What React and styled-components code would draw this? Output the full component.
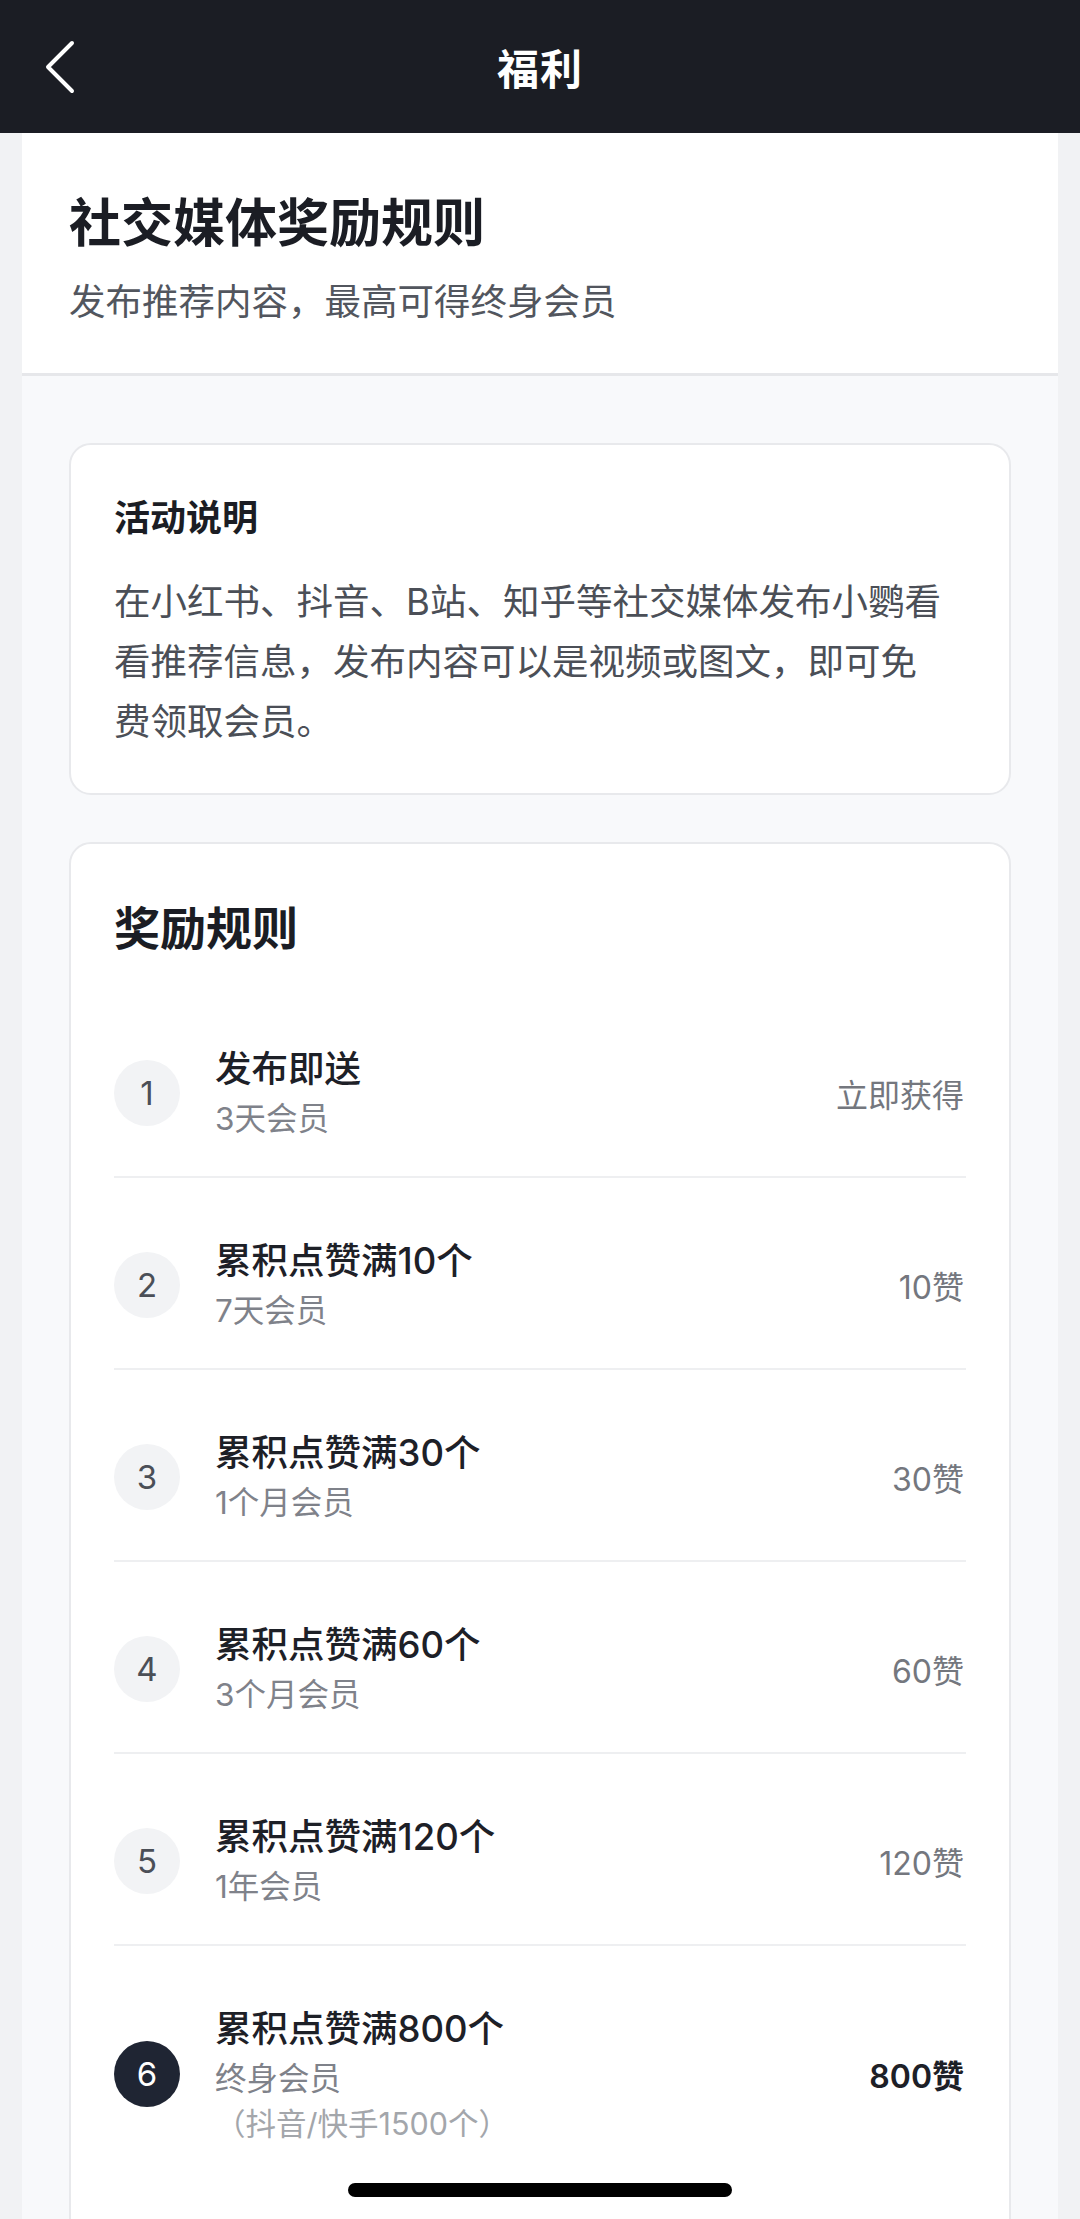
import React from "react";
import styled, { createGlobalStyle } from "styled-components";

const GlobalStyle = createGlobalStyle`
  html, body {
    margin: 0;
    padding: 0;
    background: #f1f2f4;
  }
  body {
    font-family: "Inter", "Noto Sans CJK SC", "Noto Sans", sans-serif;
    -webkit-font-smoothing: antialiased;
  }
  * { box-sizing: border-box; }
`;

const Screen = styled.div`
  width: 1080px;
  height: 2219px;
  background: #f1f2f4;
  overflow: hidden;
`;

const NavBar = styled.header`
  height: 133px;
  background: #1b1d24;
  display: grid;
  grid-template-columns: 1fr auto 1fr;
  align-items: center;
`;

const BackButton = styled.button`
  justify-self: start;
  margin-left: 40px;
  width: 40px;
  height: 60px;
  padding: 0;
  border: none;
  background: transparent;
  display: flex;
  align-items: center;
  justify-content: center;
`;

const NavTitle = styled.h1`
  margin: 0;
  color: #ffffff;
  font-size: 42px;
  font-weight: 600;
  letter-spacing: 1px;
`;

const Column = styled.main`
  margin: 0 22px;
  background: #f8f9fb;
  min-height: 2086px;
`;

const Hero = styled.section`
  background: #ffffff;
  padding: 56px 47px 46px;
  border-bottom: 3px solid #e6e7ea;
`;

const HeroTitle = styled.h2`
  margin: 0;
  font-size: 52px;
  line-height: 70px;
  font-weight: 700;
  color: #1b1d24;
`;

const HeroSub = styled.p`
  margin: 18px 0 0;
  font-size: 36.5px;
  line-height: 50px;
  color: #52565e;
`;

const Content = styled.div`
  padding: 67px 47px 0;
  display: flex;
  flex-direction: column;
  gap: 47px;
`;

const Card = styled.section`
  background: #ffffff;
  border: 2px solid #e8e9ec;
  border-radius: 22px;
  padding: ${(p) => (p.$pad ? p.$pad : "49px 43px 41px")};
`;

const CardTitle = styled.h3`
  margin: 0;
  font-size: 36px;
  line-height: 48px;
  font-weight: 600;
  color: #1b1d24;
`;

const Paragraph = styled.p`
  margin: 30px 0 0;
  font-size: 36.5px;
  line-height: 60px;
  color: #4b4f57;
  white-space: nowrap;
`;

const RulesTitle = styled.h3`
  margin: 0 0 28px;
  font-size: 46px;
  line-height: 60px;
  font-weight: 600;
  color: #1b1d24;
`;

const RuleList = styled.ul`
  list-style: none;
  margin: 0;
  padding: 0;
`;

const RuleRow = styled.li`
  display: flex;
  align-items: center;
  padding: 57px 0 33px;
  border-bottom: ${(p) => (p.$last ? "none" : "2px solid #eeeff1")};
`;

const StepBadge = styled.div`
  flex: none;
  width: 66px;
  height: 66px;
  border-radius: 50%;
  background: ${(p) => (p.$active ? "#1f2533" : "#f2f3f5")};
  color: ${(p) => (p.$active ? "#ffffff" : "#4b4f57")};
  display: flex;
  align-items: center;
  justify-content: center;
  font-size: 33px;
  font-weight: 400;
  margin-right: 35px;
`;

const RuleText = styled.div`
  flex: 1;
  display: flex;
  flex-direction: column;
`;

const RuleName = styled.div`
  font-size: 36.5px;
  line-height: 52px;
  font-weight: 500;
  color: #1d2027;
`;

const RuleReward = styled.div`
  font-size: 31.5px;
  line-height: 48px;
  color: #7f828a;
`;

const RuleNote = styled.div`
  font-size: 30.5px;
  line-height: 42px;
  color: #a3a6ab;
`;

const RuleValue = styled.div`
  flex: none;
  font-size: 32px;
  font-weight: ${(p) => (p.$strong ? 600 : 400)};
  color: ${(p) => (p.$strong ? "#1d2027" : "#74777e")};
  margin-right: 2px;
`;

const HomeIndicator = styled.div`
  position: fixed;
  left: 348px;
  bottom: 22px;
  width: 384px;
  height: 14px;
  border-radius: 7px;
  background: #000000;
  z-index: 10;
`;

const rules = [
  { name: "发布即送", reward: "3天会员", value: "立即获得" },
  { name: "累积点赞满10个", reward: "7天会员", value: "10赞" },
  { name: "累积点赞满30个", reward: "1个月会员", value: "30赞" },
  { name: "累积点赞满60个", reward: "3个月会员", value: "60赞" },
  { name: "累积点赞满120个", reward: "1年会员", value: "120赞" },
  {
    name: "累积点赞满800个",
    reward: "终身会员",
    note: "（抖音/快手1500个）",
    value: "800赞",
    highlight: true,
  },
];

function ChevronLeft() {
  return (
    <svg width="34" height="54" viewBox="0 0 34 54" fill="none">
      <polyline
        points="29,3 5,27 29,51"
        stroke="#ffffff"
        strokeWidth="4"
        strokeLinecap="round"
        strokeLinejoin="round"
      />
    </svg>
  );
}

export default function App() {
  return (
    <>
      <GlobalStyle />
      <Screen>
        <NavBar>
          <BackButton aria-label="返回">
            <ChevronLeft />
          </BackButton>
          <NavTitle>福利</NavTitle>
          <span />
        </NavBar>
        <Column>
          <Hero>
            <HeroTitle>社交媒体奖励规则</HeroTitle>
            <HeroSub>发布推荐内容，最高可得终身会员</HeroSub>
          </Hero>
          <Content>
            <Card>
              <CardTitle>活动说明</CardTitle>
              <Paragraph>
                在小红书、抖音、B站、知乎等社交媒体发布小鹦看
                <br />
                看推荐信息，发布内容可以是视频或图文，即可免
                <br />
                费领取会员。
              </Paragraph>
            </Card>
            <Card $pad="54px 43px 80px">
              <RulesTitle>奖励规则</RulesTitle>
              <RuleList>
                {rules.map((r, i) => (
                  <RuleRow key={r.name} $last={i === rules.length - 1}>
                    <StepBadge $active={r.highlight}>{i + 1}</StepBadge>
                    <RuleText>
                      <RuleName>{r.name}</RuleName>
                      <RuleReward>{r.reward}</RuleReward>
                      {r.note && <RuleNote>{r.note}</RuleNote>}
                    </RuleText>
                    <RuleValue $strong={r.highlight}>{r.value}</RuleValue>
                  </RuleRow>
                ))}
              </RuleList>
            </Card>
          </Content>
        </Column>
      </Screen>
      <HomeIndicator />
    </>
  );
}
